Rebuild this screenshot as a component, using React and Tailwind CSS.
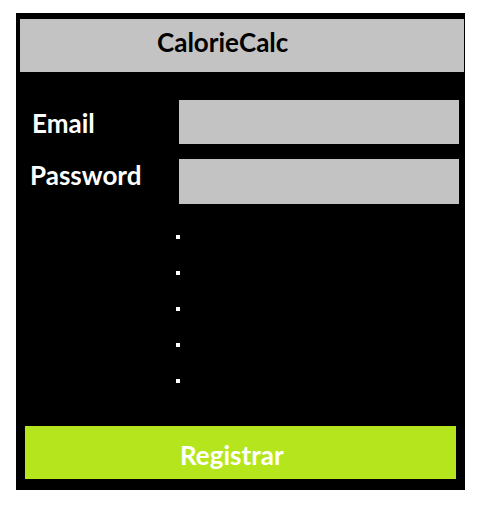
export default function App() {
  const dots = [0, 1, 2, 3, 4];

  return (
    <div className="min-h-[505px] bg-white pt-[13px] pl-[16px] font-['Lato',sans-serif]">
      <div className="w-[449px] h-[477px] bg-black flex flex-col">
        {/* Header */}
        <div className="mt-[6px] ml-[4px] w-[444px] h-[53px] bg-[#c3c3c3] flex items-start pl-[137px]">
          <span className="mt-[10px] text-[26px] leading-none font-bold text-black">CalorieCalc</span>
        </div>

        {/* Form */}
        <div className="mt-[28px] flex flex-col gap-[15px]">
          <div className="flex items-start">
            <label className="mt-[10px] w-[163px] pl-[16px] text-[26px] leading-none font-bold text-white">Email</label>
            <div className="w-[280px] h-[44px] bg-[#c3c3c3]" />
          </div>
          <div className="flex items-start">
            <label className="mt-[3px] w-[163px] pl-[14px] text-[26px] leading-none font-bold text-white">Password</label>
            <div className="w-[280px] h-[45px] bg-[#c3c3c3]" />
          </div>
        </div>

        {/* Dots */}
        <div className="mt-[31px] ml-[160px] flex flex-col gap-[32px]">
          {dots.map((d) => (
            <div key={d} className="w-[4px] h-[4px] bg-white" />
          ))}
        </div>

        {/* Button */}
        <button className="mt-[43px] ml-[9px] w-[431px] h-[53px] bg-[#b5e61d] flex items-start pl-[155px]">
          <span className="mt-[16px] text-white text-[26px] leading-none font-bold">Registrar</span>
        </button>
      </div>
    </div>
  );
}
